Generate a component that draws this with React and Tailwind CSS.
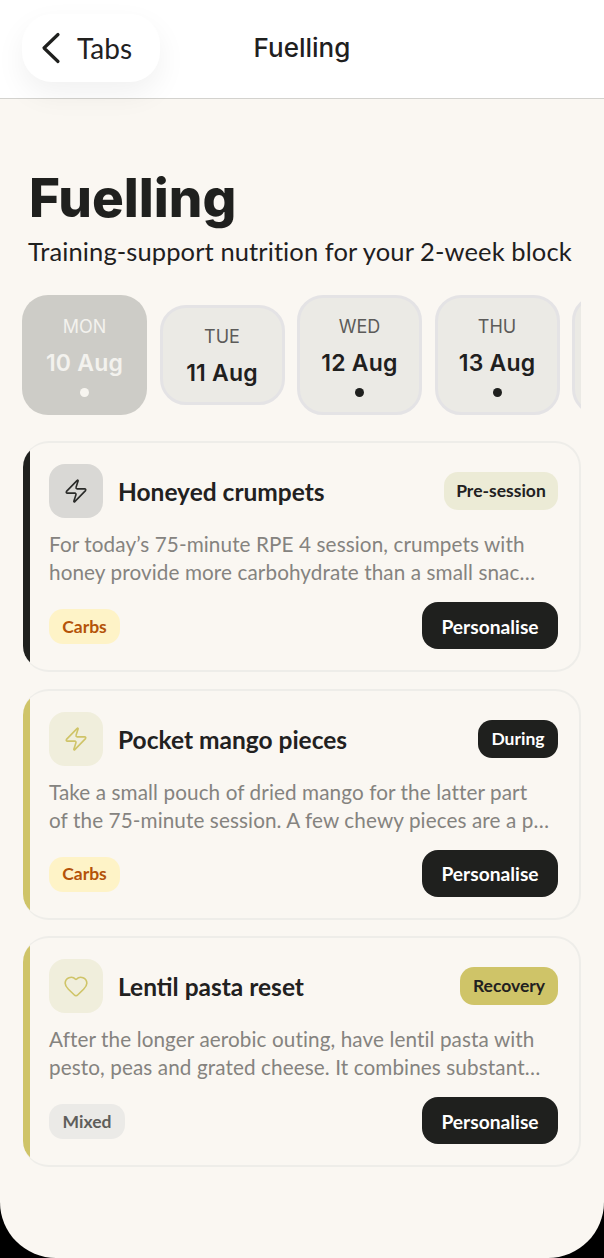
import { Heart, Zap } from 'lucide-react';

const font = { fontFamily: 'Lato, "Noto Sans", sans-serif' };
const inter = { fontFamily: 'Inter, sans-serif' };

const days = [
    { day: 'MON', date: '10 Aug', dot: true, active: true },
    { day: 'TUE', date: '11 Aug', dot: false },
    { day: 'WED', date: '12 Aug', dot: true },
    { day: 'THU', date: '13 Aug', dot: true },
];

const meals = [
    {
        title: 'Honeyed crumpets',
        badge: 'Pre-session',
        badgeClass: 'w-[114px] bg-[#ecebd6] text-[#22211f]',
        bar: 'bg-[#1f201e]',
        iconBox: 'bg-[#d9d8d5] text-[#2a2b29]',
        icon: Zap,
        lines: [
            'For today’s 75-minute RPE 4 session, crumpets with',
            'honey provide more carbohydrate than a small snac…',
        ],
        tag: 'Carbs',
        tagClass: 'w-[71px] bg-[#fef3c7] text-[#b45309]',
    },
    {
        title: 'Pocket mango pieces',
        badge: 'During',
        badgeClass: 'w-[80px] bg-[#1f201e] text-white',
        bar: 'bg-[#cfc468]',
        iconBox: 'bg-[#f0eedc] text-[#cfc468]',
        icon: Zap,
        lines: [
            'Take a small pouch of dried mango for the latter part',
            'of the 75-minute session. A few chewy pieces are a p…',
        ],
        tag: 'Carbs',
        tagClass: 'w-[71px] bg-[#fef3c7] text-[#b45309]',
    },
    {
        title: 'Lentil pasta reset',
        badge: 'Recovery',
        badgeClass: 'w-[98px] bg-[#cfc468] text-[#22211f]',
        bar: 'bg-[#cfc468]',
        iconBox: 'bg-[#f0eedc] text-[#cfc468]',
        icon: Heart,
        lines: [
            'After the longer aerobic outing, have lentil pasta with',
            'pesto, peas and grated cheese. It combines substant…',
        ],
        tag: 'Mixed',
        tagClass: 'w-[76px] bg-[#ebeae7] text-[#5f5e5b]',
    },
];

function DayCard({ day, date, dot, active }) {
    return (
        <div
            className={`flex w-[125px] shrink-0 flex-col items-center rounded-[26px] ${
                active
                    ? 'bg-[#cdccc7] pt-[21px] text-white'
                    : 'border-[3px] border-[#e4e3e5] bg-[#ebeae5] pt-[18px]'
            } ${dot ? 'h-[120px]' : 'h-[100px]'}`}
        >
            <span
                className={`text-[18px] leading-[22px] ${active ? 'text-[#f3f2ee]' : 'text-[#5c5b59]'}`}
                style={inter}
            >
                {day}
            </span>
            <span
                className={`mt-[12px] text-[23px] font-semibold leading-[26px] tracking-[0.2px] ${active ? 'text-[#f3f2ee]' : 'text-[#1f201e]'}`}
                style={inter}
            >
                {date}
            </span>
            {dot && (
                <span
                    className={`mt-[12px] size-[9px] rounded-full ${active ? 'bg-[#f7f5f0]' : 'bg-[#1f201e]'}`}
                />
            )}
        </div>
    );
}

function MealCard({ meal }) {
    const Icon = meal.icon;
    return (
        <div className="flex h-[231px] overflow-hidden rounded-[26px] border-2 border-l-0 border-[#eeede9]">
            <div className={`w-[7px] shrink-0 ${meal.bar}`} />
            <div className="min-w-0 flex-1 pl-[19px] pr-[21px] pt-[21px]">
                <div className="flex items-center">
                    <div
                        className={`flex size-[54px] shrink-0 items-center justify-center rounded-[16px] ${meal.iconBox}`}
                    >
                        <Icon size={26} strokeWidth={1.5} />
                    </div>
                    <h3 className="ml-[15px] mt-[2px] flex-1 text-[24.5px] font-bold leading-[32px] text-[#22211f]">
                        {meal.title}
                    </h3>
                    <span
                        className={`flex h-[38px] items-center justify-center rounded-[14px] pt-px text-[17.5px] font-bold ${meal.badgeClass}`}
                    >
                        {meal.badge}
                    </span>
                </div>
                <p className="mt-[12px] whitespace-nowrap text-[20.7px] leading-[28px] tracking-[0.1px] text-[#85837f]">
                    {meal.lines.map((line) => (
                        <span key={line} className="block">
                            {line}
                        </span>
                    ))}
                </p>
                <div className="mt-[16px] flex items-start justify-between">
                    <span
                        className={`mt-[7px] flex h-[35px] items-center justify-center rounded-[14px] pt-px text-[17.5px] font-bold ${meal.tagClass}`}
                    >
                        {meal.tag}
                    </span>
                    <button className="h-[47px] w-[136px] rounded-[16px] bg-[#1f201e] pt-[3px] text-[19.2px] font-bold text-white">
                        Personalise
                    </button>
                </div>
            </div>
        </div>
    );
}

export default function App() {
    return (
        <div className="h-[1258px] w-[604px] overflow-hidden bg-black" style={font}>
            <div className="h-full rounded-b-[56px] bg-[#faf7f2]">
                <header className="relative flex h-[99px] items-center justify-center border-b border-[#d3d2ce] bg-white pb-[3px]">
                    <div className="absolute left-[22px] top-[14px] flex h-[68px] w-[138px] items-center rounded-[30px] bg-white pl-[19px] shadow-[0_12px_30px_rgba(0,0,0,0.06)]">
                        <svg width="20" height="32" viewBox="0 0 20 32" fill="none" stroke="#1f201e" strokeWidth="3.2" strokeLinecap="round" strokeLinejoin="round">
                            <path d="M17 2.5 3 16l14 13.5" />
                        </svg>
                        <span className="ml-[16px] text-[28px] text-[#22211f]">Tabs</span>
                    </div>
                    <h2 className="text-[26px] font-medium text-[#1f201e]" style={inter}>
                        Fuelling
                    </h2>
                </header>

                <div className="px-[28px] pt-[64px]">
                    <h1 className="ml-px text-[53px] font-extrabold leading-[70px] text-[#1f201e]" style={inter}>
                        Fuelling
                    </h1>
                    <p className="whitespace-nowrap text-[25.5px] leading-[36px] tracking-[0.1px] text-[#1f201e]">
                        Training-support nutrition for your 2-week block
                    </p>
                </div>

                <div className="ml-[22px] mt-[26px] flex h-[120px] w-[559px] items-center gap-[12.5px] overflow-hidden">
                    {days.map((d) => (
                        <DayCard key={d.day} {...d} />
                    ))}
                    <div className="h-[120px] w-[125px] shrink-0 rounded-[26px] border-[3px] border-[#e4e3e5] bg-[#ebeae5]" />
                </div>

                <div className="ml-[23px] mt-[26px] flex w-[558px] flex-col gap-[16.5px]">
                    {meals.map((meal) => (
                        <MealCard key={meal.title} meal={meal} />
                    ))}
                </div>
            </div>
        </div>
    );
}
